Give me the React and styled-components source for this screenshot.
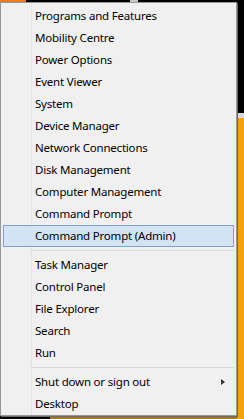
import React from 'react'
import styled, { createGlobalStyle } from 'styled-components'

const GlobalStyle = createGlobalStyle`
	html, body {
		margin: 0;
		padding: 0;
		overflow: hidden;
	}
	body {
		width: 244px;
		height: 419px;
		background: #000;
	}
`

const groups = [
	[
		'Programs and Features',
		'Mobility Centre',
		'Power Options',
		'Event Viewer',
		'System',
		'Device Manager',
		'Network Connections',
		'Disk Management',
		'Computer Management',
		'Command Prompt',
		{ label: 'Command Prompt (Admin)', active: true },
	],
	['Task Manager', 'Control Panel', 'File Explorer', 'Search', 'Run'],
	[{ label: 'Shut down or sign out', submenu: true }, 'Desktop'],
]

const App = () => {
	return (
		<>
			<GlobalStyle />
			<Desktop>
				<Menu>
					{groups.map((group, i) => (
						<React.Fragment key={i}>
							{i > 0 && <Separator />}
							{group.map(entry => {
								const item = typeof entry === 'string' ? { label: entry } : entry
								return (
									<Item key={item.label} active={item.active}>
										<Label>{item.label}</Label>
										{item.submenu && <Arrow />}
									</Item>
								)
							})}
						</React.Fragment>
					))}
				</Menu>
			</Desktop>
		</>
	)
}

const Desktop = styled.div`
	width: 244px;
	height: 419px;
	padding-top: 2px;
	box-sizing: border-box;
	background:
		linear-gradient(to right, #ef7d1c 0 26px, transparent 26px) top left / 244px 2px no-repeat,
		linear-gradient(to right, transparent 130px, #c8c8c8 130px 138px, transparent 138px) top left / 244px 2px no-repeat,
		linear-gradient(to bottom, transparent 113px, #d8d8d8 113px 118px, #f4a10e 118px) right top / 7px 419px no-repeat,
		linear-gradient(to right, transparent 50px, #a3742a 50px) left bottom / 244px 3px no-repeat,
		#000;
`

const Menu = styled.div`
	width: 237px;
	height: 414px;
	box-sizing: border-box;
	background: #f0f0f0;
	border: 1px solid #979797;
	box-shadow: 1px 1px 0 #6a6a6a;
	padding-top: 2px;
	position: relative;
	display: flex;
	flex-direction: column;

	&::before {
		content: '';
		position: absolute;
		left: 30px;
		top: 0;
		bottom: 0;
		width: 1px;
		background: #e2e3e3;
	}
`

const Item = styled.div`
	position: relative;
	z-index: 1;
	height: 22px;
	margin: 0 2px 0 2px;
	box-sizing: border-box;
	display: flex;
	align-items: center;
	padding-left: 31px;
	padding-right: 8px;
	border: 1px solid ${p => (p.active ? '#7da2ce' : 'transparent')};
	background: ${p => (p.active ? '#d3e3f3' : 'transparent')};
`

const Label = styled.span`
	flex: 1;
	font-family: 'Noto Sans', 'Open Sans', sans-serif;
	font-size: 11.5px;
	letter-spacing: -0.2px;
	color: #000;
	white-space: nowrap;
	line-height: 16px;
`

const Arrow = styled.span`
	width: 0;
	height: 0;
	border-top: 3.5px solid transparent;
	border-bottom: 3.5px solid transparent;
	border-left: 4px solid #333;
`

const Separator = styled.div`
	height: 7px;
	margin-left: 30px;
	margin-right: 2px;
	position: relative;
	z-index: 1;

	&::after {
		content: '';
		display: block;
		height: 1px;
		margin-top: 3px;
		background: #d7d7d7;
	}
`

export default App
